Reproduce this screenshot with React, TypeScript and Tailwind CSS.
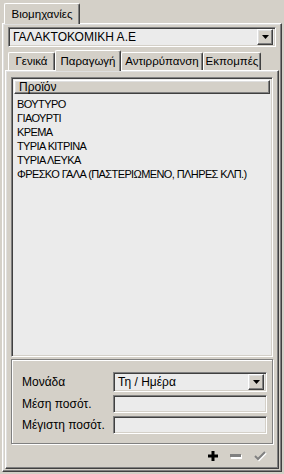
const raised =
  'border border-t-white border-l-white border-r-[#404040] border-b-[#404040] shadow-[inset_-1px_-1px_0_#808080,inset_1px_1px_0_#dfdfdf]'
const sunken =
  'border border-t-[#808080] border-l-[#808080] border-r-white border-b-white shadow-[inset_1px_1px_0_#404040,inset_-1px_-1px_0_#d4d0c8]'

const products = [
  'ΒΟΥΤΥΡΟ',
  'ΓΙΑΟΥΡΤΙ',
  'ΚΡΕΜΑ',
  'ΤΥΡΙΑ ΚΙΤΡΙΝΑ',
  'ΤΥΡΙΑ ΛΕΥΚΑ',
  'ΦΡΕΣΚΟ ΓΑΛΑ (ΠΑΣΤΕΡΙΩΜΕΝΟ, ΠΛΗΡΕΣ ΚΛΠ.)',
]

function DropButton() {
  return (
    <div className={`flex h-[16px] w-[16px] shrink-0 items-center justify-center bg-[#d4d0c8] ${raised}`}>
      <svg width="7" height="4" viewBox="0 0 7 4" aria-hidden="true">
        <path d="M0 0h7L3.5 4z" fill="black" />
      </svg>
    </div>
  )
}

function Tab({ label, width, active }: { label: string; width: string; active?: boolean }) {
  return (
    <div
      className={`flex items-center justify-center whitespace-nowrap rounded-t-[2px] border border-b-0 border-t-white border-l-white border-r-[#404040] bg-[#d4d0c8] pt-[1px] text-[11.5px] shadow-[inset_-1px_0_0_#808080] ${width} ${
        active ? 'relative z-10 -mb-px h-[21px]' : 'h-[18px]'
      }`}
    >
      {label}
    </div>
  )
}

export default function App() {
  return (
    <div className="flex h-[474px] w-[284px] flex-col bg-[#d4d0c8] px-[2px] pb-[2px] pt-[3px] font-['Liberation_Sans',Arial,sans-serif] text-[12px] leading-none text-black">
      <div className="flex pl-[2px]">
        <Tab label="Βιομηχανίες" width="w-[76px]" active />
      </div>

      <div className={`flex flex-1 flex-col ${raised} p-[2px]`}>
        <div className={`mx-[3px] mt-[1px] flex h-[20px] items-center bg-[#ebebeb] p-[2px] ${sunken}`}>
          <span className="flex-1 pl-[2px]">ΓΑΛΑΚΤΟΚΟΜΙΚΗ Α.Ε</span>
          <DropButton />
        </div>

        <div className="mt-[3px] flex items-end pl-[3px]">
          <Tab label="Γενικά" width="w-[47px]" />
          <Tab label="Παραγωγή" width="w-[66px]" active />
          <Tab label="Αντιρρύπανση" width="w-[82px]" />
          <Tab label="Εκπομπές" width="w-[58px]" />
        </div>

        <div className={`flex flex-1 flex-col ${raised} px-[5px] pt-[6px]`}>
          <div className={`flex flex-1 flex-col bg-[#ebebeb] p-[2px] ${sunken}`}>
            <div className={`flex h-[14px] items-center bg-[#d4d0c8] pl-[4px] ${raised}`}>Προϊόν</div>
            <ul className="mt-[3px] pl-[3px] text-[11px] tracking-[-0.6px]">
              {products.map((p) => (
                <li key={p} className="h-[14px] whitespace-nowrap leading-[14px]">
                  {p}
                </li>
              ))}
            </ul>
          </div>

          <div className="mt-[2px] flex flex-col gap-[3px] border border-[#808080] pb-[9px] pl-[10px] pr-[5px] pt-[12px] shadow-[1px_1px_0_white,inset_1px_1px_0_white]">
            <div className="flex items-center">
              <span className="w-[91px]">Μονάδα</span>
              <div className={`flex h-[20px] flex-1 items-center bg-[#ebebeb] p-[2px] ${sunken}`}>
                <span className="flex-1 pl-[2px]">Τη / Ημέρα</span>
                <DropButton />
              </div>
            </div>
            <div className="flex items-center">
              <span className="w-[91px]">Μέση ποσότ.</span>
              <div className={`h-[18px] flex-1 bg-[#ebebeb] ${sunken}`} />
            </div>
            <div className="flex items-center">
              <span className="w-[91px]">Μέγιστη ποσότ.</span>
              <div className={`h-[18px] flex-1 bg-[#ebebeb] ${sunken}`} />
            </div>
          </div>

          <div className="flex h-[24px] items-center justify-end gap-[12px] pr-[6px]">
            <svg width="10" height="10" viewBox="0 0 10 10" aria-label="Προσθήκη">
              <path d="M3.5 0h3v3.5H10v3H6.5V10h-3V6.5H0v-3h3.5z" fill="black" />
            </svg>
            <svg width="12" height="5" viewBox="0 0 12 5" aria-label="Διαγραφή">
              <rect x="1" y="1" width="11" height="4" fill="white" />
              <rect x="0" y="0" width="11" height="3" fill="#808080" />
            </svg>
            <svg width="13" height="11" viewBox="0 0 13 11" aria-label="Αποθήκευση">
              <path d="M2 6l3 3 7-7" fill="none" stroke="white" strokeWidth="2" />
              <path d="M1 5l3 3 7-7" fill="none" stroke="#808080" strokeWidth="2" />
            </svg>
          </div>
        </div>
      </div>
    </div>
  )
}
